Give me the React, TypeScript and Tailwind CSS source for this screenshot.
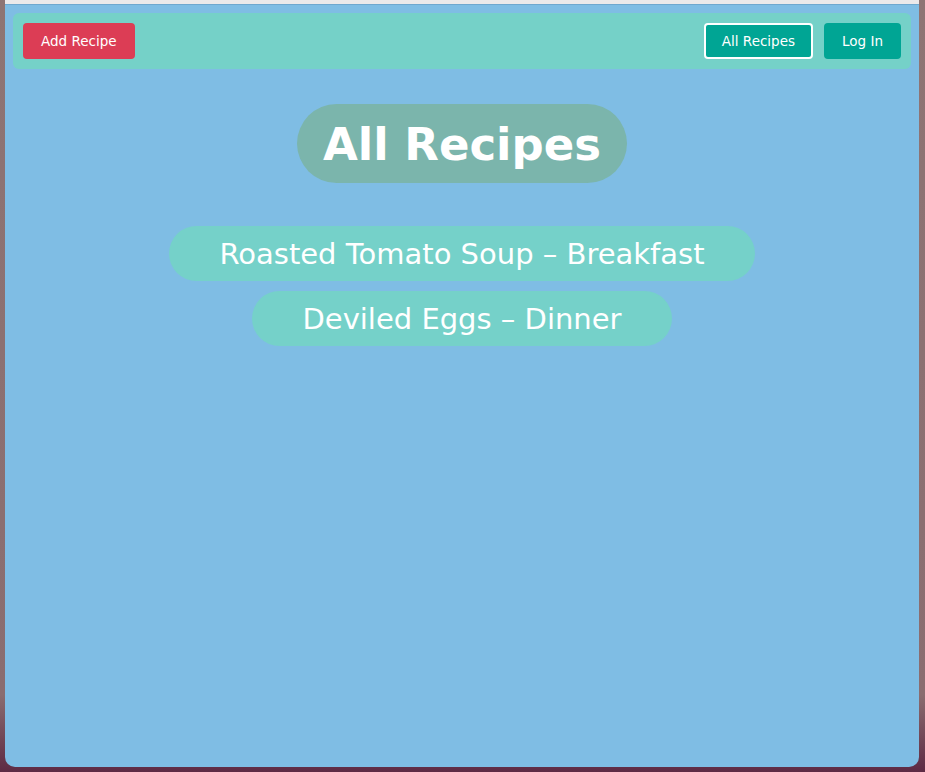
const RECIPES = [
  { name: 'Roasted Tomato Soup', meal: 'Breakfast' },
  { name: 'Deviled Eggs', meal: 'Dinner' },
];

function NavBar() {
  return (
    <nav className="mx-[8px] mt-[8px] flex h-[56px] items-center justify-between rounded-[6px] bg-[#75d1c8] px-[10px]">
      <button className="flex h-[36px] items-center rounded-[4px] bg-[#dc3d55] px-[18px] pt-px text-[13.5px] text-white">
        Add Recipe
      </button>
      <div className="flex items-center gap-[11px]">
        <button className="flex h-[36px] items-center rounded-[4px] border-2 border-white bg-[#00a594] px-[16px] pt-px text-[13.5px] text-white">
          All Recipes
        </button>
        <button className="flex h-[36px] items-center rounded-[4px] bg-[#00a594] px-[18px] pt-px text-[13.5px] text-white">
          Log In
        </button>
      </div>
    </nav>
  );
}

export default function App() {
  return (
    <div
      className="flex h-[772px] w-[925px] bg-linear-to-b from-[#8e7574] via-[#8a6d70] via-90% to-[#5d2a44] pb-[5px] pl-[5px] pr-[6px]"
      style={{ fontFamily: '"DejaVu Sans", Verdana, sans-serif' }}
    >
      <div className="flex flex-1 flex-col overflow-hidden rounded-b-[10px] bg-[#7fbde4]">
        <div className="h-[4px] bg-[#ebe9ea]" />
        <div className="h-px bg-[#6fa8cf]" />
        <NavBar />
        <main className="flex flex-col items-center pt-[35px]">
          <h1 className="flex h-[79px] items-center rounded-full bg-[#7bb5ac] px-[26px] pt-[2px] text-[45px] font-bold text-white">
            All Recipes
          </h1>
          <ul className="mt-[43px] flex flex-col items-center gap-[10px]">
            {RECIPES.map((r) => (
              <li
                key={r.name}
                className="flex h-[55px] items-center rounded-full bg-[#75d1c9] px-[50px] pt-[3px] text-[29px] text-white"
              >
                {r.name} – {r.meal}
              </li>
            ))}
          </ul>
        </main>
      </div>
    </div>
  );
}
